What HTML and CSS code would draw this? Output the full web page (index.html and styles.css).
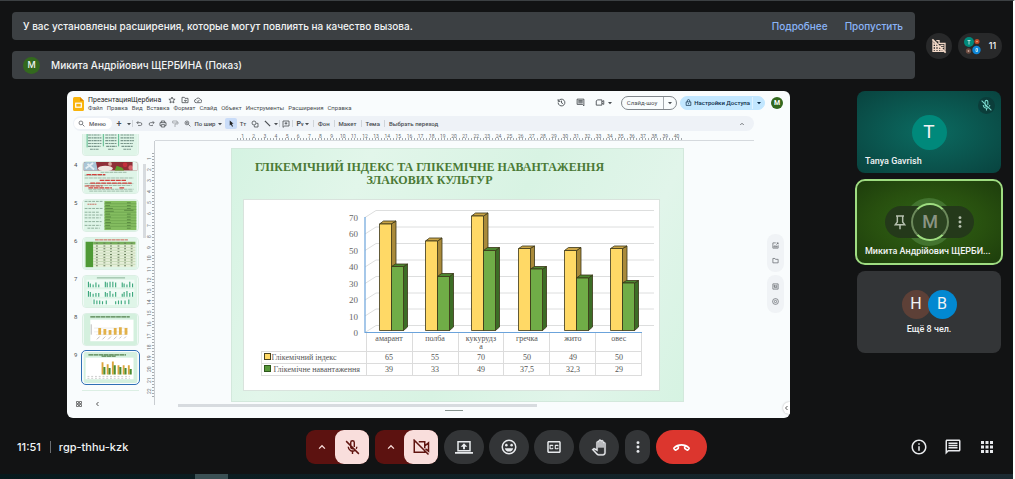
FILE: index.html
```html
<!DOCTYPE html>
<html lang="ru">
<head>
<meta charset="utf-8">
<meta name="viewport" content="width=device-width, initial-scale=1">
<title>rgp-thhu-kzk</title>
<link rel="stylesheet" href="styles.css">
</head>
<body>
<svg class="defs" width="0" height="0" aria-hidden="true">
  <symbol id="i-micoff" viewBox="0 0 24 24"><path d="M9.5 9V5a2.5 2.5 0 0 1 5 0v6.2M9.5 10v1.2a2.5 2.5 0 0 0 3.4 2.3M6 11a6 6 0 0 0 9.3 5M18 11a6 6 0 0 1-.8 3M12 17v4M3 3l18 18" fill="none" stroke="currentColor" stroke-width="2"/></symbol>
  <symbol id="i-up" viewBox="0 0 24 24"><path d="M5 16l7-7 7 7" fill="none" stroke="currentColor" stroke-width="3"/></symbol>
  <symbol id="i-more" viewBox="0 0 24 24"><g fill="currentColor"><circle cx="12" cy="4.500" r="2.500"/><circle cx="12" cy="12" r="2.500"/><circle cx="12" cy="19.500" r="2.500"/></g></symbol>
  <symbol id="i-drop" viewBox="0 0 6 6"><path d="M1 2h4L3 4.300z" fill="currentColor"/></symbol>
</svg>

<header class="top">
  <div class="banners">
    <div class="banner">
      <p>У вас установлены расширения, которые могут повлиять на качество вызова.</p>
      <a href="#more">Подробнее</a>
      <a href="#skip">Пропустить</a>
    </div>
    <div class="banner">
      <span class="badge">М</span>
      <p>Микита Андрійович ЩЕРБИНА (Показ)</p>
    </div>
  </div>
  <div class="status">
    <button class="chip" aria-label="Внешние участники">
      <svg width="16" height="16" viewBox="0 0 24 24"><g fill="none" stroke="#f3d9c8" stroke-width="2"><path d="M3 5v15h16M8 4h4v4h9v11M3 9h4M3 13h12M3 17h14M7 8v12M11 12v8M15 16v4"/><path d="M2 2l20 20" stroke-width="2.500"/></g><path d="M14 11h5M15 14h4" stroke="#f3d9c8" stroke-width="2"/></svg>
    </button>
    <button class="chip people" aria-label="Участники: 11">
      <svg width="18" height="18" viewBox="0 0 18 18"><circle cx="5" cy="5" r="5" fill="#00897b"/><circle cx="13" cy="4.500" r="2.500" fill="#bf4a26"/><circle cx="4.500" cy="14" r="2.700" fill="#6d4c41"/><circle cx="12.500" cy="13" r="4.200" fill="#0d86d8"/><path d="M3.500 3.500h3M5 3.500v4M12 11.500v3h1.500v-3z" stroke="#d7f3f0" stroke-width=".8" fill="none"/><circle cx="13" cy="4.500" r=".8" fill="#f0b090"/><circle cx="4.500" cy="14" r=".9" fill="#c9a99d"/></svg>
      <span>11</span>
    </button>
  </div>
</header>

<main class="stage">
  <section class="share">
    <div class="doc-head">
      <svg class="logo" width="11" height="14" viewBox="0 0 11 14"><path d="M1.500 0H7l4 4v8.500q0 1.500-1.500 1.500h-8Q0 14 0 12.500v-11Q0 0 1.500 0z" fill="#f9b40b"/><path d="M7 0l4 4H7z" fill="#e08b00"/><rect x="2.700" y="6.200" width="5.600" height="4" fill="none" stroke="#fff" stroke-width="1.200"/></svg>
      <div class="doc-names">
        <div class="doc-title"><span>ПрезентацияЩербина</span>
          <svg width="8" height="8" viewBox="0 0 24 24" class="ln"><path d="M12 3l2.700 6.200 6.600.6-5 4.400 1.500 6.600-5.800-3.500-5.800 3.500 1.500-6.600-5-4.400 6.600-.6z"/></svg>
          <svg width="8" height="8" viewBox="0 0 24 24" class="ln"><path d="M3 20V4h7l2 3h9v13zM9 14h7M13 11l3 3-3 3"/></svg>
          <svg width="8" height="8" viewBox="0 0 24 24" class="ln"><path d="M7 20a5 5 0 0 1-1-10 7 7 0 0 1 13 1 4.500 4.500 0 0 1 0 9zM9 14l3 3 4-5"/></svg>
        </div>
        <nav class="menu"><a href="#f">Файл</a><a href="#e">Правка</a><a href="#v">Вид</a><a href="#i">Вставка</a><a href="#o">Формат</a><a href="#s">Слайд</a><a href="#b">Объект</a><a href="#t">Инструменты</a><a href="#x">Расширения</a><a href="#h">Справка</a></nav>
      </div>
      <div class="doc-actions">
        <svg width="9" height="9" viewBox="0 0 24 24" class="ln"><path d="M4 8a9 9 0 1 1-1 4M3 3v6h6M12 7v6l4 2"/></svg>
        <svg width="9" height="9" viewBox="0 0 24 24" class="ln"><path d="M3 3h18v18l-4-4H3zM6 7h12M6 10h12M6 13h12"/></svg>
        <span class="cam"><svg width="10" height="9" viewBox="0 0 26 24" class="ln"><path d="M6 5h12v14H3V8zM18 10l5-3v10l-5-3"/></svg><svg width="6" height="6"><use href="#i-drop"/></svg></span>
        <div class="split"><button>Слайд-шоу</button><button aria-label="Варианты показа"><svg width="6" height="6"><use href="#i-drop"/></svg></button></div>
        <div class="split access"><button><svg width="7" height="7" viewBox="0 0 24 24" class="ln"><path d="M4 10h16v12H4zM8 10V6a4 4 0 0 1 8 0v4M12 14v4"/></svg>Настройки Доступа</button><button aria-label="Варианты доступа"><svg width="6" height="6"><use href="#i-drop"/></svg></button></div>
        <span class="badge small">М</span>
      </div>
    </div>

    <div class="toolbar">
      <label class="find"><svg width="7" height="7" viewBox="0 0 24 24" class="ln"><circle cx="10" cy="10" r="6.500"/><path d="M15 15l7 7"/></svg><input type="text" placeholder="Меню" aria-label="Меню"></label>
      <button class="t s">+</button>
      <button class="t xs" aria-label="Макеты"><svg width="6" height="6"><use href="#i-drop"/></svg></button><i></i>
      <button class="t" aria-label="Отменить"><svg width="7" height="7" viewBox="0 0 24 24" class="ln"><path d="M8 4L3 9l5 5M3 9h12a5 5 0 0 1 0 10H7"/></svg></button>
      <button class="t" aria-label="Повторить"><svg width="7" height="7" viewBox="0 0 24 24" class="ln"><path d="M16 4l5 5-5 5M21 9H9a5 5 0 0 0 0 10h8"/></svg></button>
      <button class="t" aria-label="Печать"><svg width="8" height="8" viewBox="0 0 24 24" class="ln"><path d="M7 8V3h10v5M6 17H3V8h18v9h-3M7 14h10v7H7z"/></svg></button>
      <button class="t pale" aria-label="Копировать формат"><svg width="8" height="8" viewBox="0 0 24 24" class="ln"><path d="M5 3h13v6H5zM18 6h3v6h-9v9"/></svg></button>
      <button class="t" aria-label="Увеличить"><svg width="7" height="7" viewBox="0 0 24 24" class="ln"><circle cx="10" cy="10" r="6.500"/><path d="M15 15l7 7M7 10h6M10 7v6"/></svg></button>
      <button class="t zoom">По шир <svg width="6" height="6"><use href="#i-drop"/></svg></button>
      <button class="t on" aria-label="Выбрать"><svg width="7" height="7" viewBox="0 0 24 24"><path d="M6 2l13 11h-6l4 8-3 2-4-8-4 4z" fill="#222"/></svg></button>
      <button class="t">Тт</button>
      <button class="t" aria-label="Фигура"><svg width="8" height="8" viewBox="0 0 24 24" class="ln"><circle cx="9" cy="9" r="6"/><path d="M16 10h5v11H10v-5"/></svg></button>
      <button class="t" aria-label="Линия"><svg width="7" height="7" viewBox="0 0 24 24" class="ln"><path d="M3 3l18 18" stroke-width="4"/></svg></button>
      <button class="t xs" aria-label="Типы линий"><svg width="6" height="6"><use href="#i-drop"/></svg></button><i></i>
      <button class="t" aria-label="Комментарий"><svg width="8" height="8" viewBox="0 0 24 24" class="ln"><path d="M3 3h18v15H8l-5 4zM8 10h8M12 6v8"/></svg></button><i></i>
      <button class="t pen">P<small>v</small> <svg width="6" height="6"><use href="#i-drop"/></svg></button><i></i>
      <button class="t word">Фон</button><i></i>
      <button class="t word">Макет</button><i></i>
      <button class="t word">Тема</button><i></i>
      <button class="t word">Выбрать переход</button>
      <button class="t fold" aria-label="Скрыть меню"><svg width="6" height="6"><use href="#i-up"/></svg></button>
    </div>

    <div class="work">
      <aside class="film">
        <ol>
          <li><span></span><svg class="thumb first" viewBox="0 0 57 22"><rect width="57" height="22" fill="#dff5e8"/><path d="M4 0v14M21 0v13M37 0v13" stroke="#55b98c" stroke-width="1"/><path d="M5 1h13M5 4h14M5 7h14M5 10h14M5 13h13M23 1h12M23 4h12M23 7h12M23 10h12M24 13h11M39 1h14M39 4h14M39 7h14M39 10h13M40 13h12M7 16h9M26 16h6M42 16h8" stroke="#78958a" stroke-width="1.200" stroke-dasharray="3 .6 2 .5"/></svg></li>
          <li><span>4</span><svg class="thumb" viewBox="0 0 57 33"><rect width="57" height="33" fill="#dff5e8"/><rect width="57" height="9" fill="#8f2f37"/><path d="M0 0h13l2 9H0z" fill="#a9c6d6"/><path d="M4 2l7 6M2 7l8-6" stroke="#e4eef2" stroke-width="2"/><ellipse cx="23" cy="7" rx="8" ry="3" fill="#eee5df"/><circle cx="28" cy="2" r="2" fill="#d9a59c"/><circle cx="44" cy="3" r="2.500" fill="#c52f3c"/><circle cx="50" cy="6" r="2.500" fill="#d9646b"/><path d="M33 9l2-5 3 1 3 1 2 3z" fill="#5f9e2f"/><rect x="52" width="5" height="9" fill="#e8f5ee"/><path d="M18 11h28M1 14h22M1 17h52M1 23h52M3 25h48M5 29h48M6 31h46" stroke="#9bb8a5" stroke-width="1" stroke-dasharray="4 .7"/><path d="M3 13.500h20M17 19.500h28M7 22.500h33M41 22.500h10M1 25.500h19M5 27.500h25M38 27.500h5" stroke="#d4403c" stroke-width="1.200" stroke-dasharray="5 .8"/></svg></li>
          <li><span>5</span><svg class="thumb" viewBox="0 0 57 33"><rect width="57" height="33" fill="#dff5e8"/><rect x="22" y="1" width="34" height="31" fill="#84bd60"/><path d="M1 1.500h20M1 9h20M1 13h15M1 16h19M1 19h17M1 23h18M1 27h17M4 30h13" stroke="#8bab98" stroke-dasharray="3 1"/><path d="M4 4.500h10" stroke="#c86b5e" stroke-dasharray="2 .5"/><path d="M22 4h34M22 7h34M22 10h34M22 13h34M22 16h34M22 19h34M22 22h34M22 25h34M22 28h34" stroke="#649c47" stroke-width=".6"/><path d="M23 3h6M23 6h5M23 9h8M23 12h9M23 15h5M23 18h6M23 21h5M23 24h6M23 27h5M23 30h6M46 3h4M46 6h4M46 9h4M43 11h10M46 15h4M46 18h4M46 21h4M46 24h4M46 27h4M46 30h4" stroke="#4e7c3a" stroke-width=".8"/></svg></li>
          <li><span>6</span><svg class="thumb" viewBox="0 0 57 33"><rect width="57" height="33" fill="#dff5e8"/><path d="M12 2h35" stroke="#cc5a4c" stroke-width="1" stroke-dasharray="4 .5"/><rect x="2" y="4" width="53" height="27" fill="#e6efd9"/><rect x="2" y="4" width="8" height="27" fill="#4e9a35"/><path d="M10 4h45v3H10z" fill="#77ae5b"/><path d="M10 10h45M10 13h45M10 16h45M10 19h45M10 22h45M10 25h45M10 28h45" stroke="#b9cfa8" stroke-width=".7"/><path d="M14 5v25M22 5v25M29 5v25M37 5v25M44 5v25M51 5v25" stroke="#667d59" stroke-width="2" stroke-dasharray="1 2"/></svg></li>
          <li><span>7</span><svg class="thumb" viewBox="0 0 57 33"><rect width="57" height="33" fill="#dff5e8"/><path d="M3 4h51v8H3zM3 14h51v8H3zM9 24h40v7H9z" fill="#f1fbf6"/><path d="M14 2h30" stroke="#6e9c7e" stroke-width=".8"/><g stroke="#3ba77b" stroke-width="1.200"><path d="M5 12V6M7 12V8M10 12V9M13 12V7M16 12V9M23 12V6M25 12V7M28 12V6M31 12V6M34 12V7M41 12V7M43 12V8M46 12V9M49 12V6M52 12V8M5 22v-6M7 22v-5M10 22v-3M13 22v-4M16 22v-4M23 22v-5M25 22v-4M28 22v-6M31 22v-3M34 22v-5M41 22v-3M43 22v-5M46 22v-6M49 22v-4M52 22v-5M11 30v-5M14 30v-4M17 30v-4M20 30v-3M24 30v-4M34 30v-3M37 30v-4M40 30v-4M44 30v-4M48 30v-5"/></g></svg></li>
          <li><span>8</span><svg class="thumb" viewBox="0 0 57 33"><rect width="57" height="33" fill="#d4f0de"/><rect x="7" y="6" width="46" height="23" fill="#fff"/><path d="M7 3h42" stroke="#4f7f49" stroke-width="1.200" stroke-dasharray="5 .5"/><path d="M11 15h36M11 19h36M13 22h33" stroke="#ddd" stroke-width=".6"/><path d="M17 22v-7M22.500 22v-6M28 22v-5M33.500 22v-7M39 22v-8M45 22v-7" stroke="#e2b149" stroke-width="3"/><path d="M14 27l3-3M20 27l3-3M26 27l3-3M32 27l3-3M38 26l2-2M43 26l2-2M8 11v11" stroke="#aaa" stroke-width=".8"/></svg></li>
          <li class="current"><span>9</span><svg class="thumb" viewBox="0 0 57 33"><rect width="57" height="33" fill="#d4f0de"/><rect x="2" y="6" width="51" height="23" fill="#fff"/><path d="M5 3h40M19 4.500h15" stroke="#4f7f49" stroke-width="1.200" stroke-dasharray="5 .5"/><path d="M20 24V11M25.500 24V13M31 24V10M37 24V14M42.500 24V14M48 24V14" stroke="#dba53c" stroke-width="2"/><path d="M22 24v-8M27.500 24v-7M33 24V14M39 24v-8M44.500 24v-7M50 24v-6" stroke="#4b8c31" stroke-width="2.200"/><path d="M4 26h45M4 28h45" stroke="#bbb" stroke-width=".8" stroke-dasharray="2 2"/></svg></li>
        </ol>
        <div class="next"></div>
        <div class="film-foot">
          <svg width="6" height="6" viewBox="0 0 6 6" fill="none" stroke="#555"><path d="M.5.5h2v2h-2zM3.500.5h2v2h-2zM.5 3.500h2v2h-2zM3.500 3.500h2v2h-2z" stroke-width=".8"/></svg>
          <svg width="5" height="6" viewBox="0 0 5 6" fill="none" stroke="#555"><path d="M3.500 1L1.500 3l2 2"/></svg>
        </div>
      </aside>
      <div class="film-scroll"></div>
      <div class="vruler"><span>1</span><span>2</span><span>3</span><span>4</span><span>5</span><span>6</span><span>7</span><span>8</span><span>9</span><span>10</span><span>11</span><span>12</span><span>13</span><span>14</span><span>15</span><span>16</span><span>17</span><span>18</span><span>19</span><span>20</span><span>21</span><span>22</span></div>
      <div class="canvas">
        <div class="hruler"><span>1</span><span>2</span><span>3</span><span>4</span><span>5</span><span>6</span><span>7</span><span>8</span><span>9</span><span>10</span><span>11</span><span>12</span><span>13</span><span>14</span><span>15</span><span>16</span><span>17</span><span>18</span><span>19</span><span>20</span><span>21</span><span>22</span><span>23</span><span>24</span><span>25</span><span>26</span><span>27</span><span>28</span><span>29</span><span>30</span><span>31</span><span>32</span><span>33</span><span>34</span><span>35</span><span>36</span><span>37</span><span>38</span><span>39</span><span>40</span></div>
        <div class="slide">
          <h1>ГЛІКЕМІЧНИЙ ІНДЕКС ТА ГЛІКЕМІЧНЕ НАВАНТАЖЕННЯ<br>ЗЛАКОВИХ КУЛЬТУР</h1>
          <div class="card">
            <svg class="plot" viewBox="244 200 415 133">
              <g fill="none" stroke="#d4d6d6" stroke-width=".8">
                <path d="M365 217.500l11-7h278M365 234l11-7h278M365 250.500l11-7h278M365 267l11-7h278M365 283.500l11-7h278M365 300l11-7h278M365 316l11-7h278M365 332.500l11-7h278"/>
              </g>
              <g class="axis"><text x="358" y="221">70</text><text x="358" y="237">60</text><text x="358" y="254">50</text><text x="358" y="270">40</text><text x="358" y="287">30</text><text x="358" y="303">20</text><text x="358" y="320">10</text><text x="358" y="336">0</text></g>
              <path d="M365 217v115.500h277" fill="none" stroke="#6ba3db" stroke-width="1.200"/>
              <g stroke="#3a3516" stroke-width=".8" stroke-linejoin="round">
                <g fill="#a98a3a"><path d="M391 224l5-3v106l-5 3.500zM437.500 241l4.500-3v89l-4.500 3.500zM483.500 216l4.500-3v114l-4.500 3.500zM530 248.500l4.500-2.500v81l-4.500 3.500zM576.500 250.500l4.500-3v79.500l-4.500 3.500zM622.500 248.500l4.500-2.500v81l-4.500 3.500z"/></g>
                <g fill="#caa548"><path d="M379.500 224l4-3H396l-5 3zM425.500 241l4-3H442l-4.500 3zM471.500 216l4-3H488l-4.500 3zM518.500 248.500l4-2.500h12l-4.500 2.500zM564.500 250.500l4-3H581l-4.500 3zM610.500 248.500l4-2.500H627l-4.500 2.500z"/></g>
                <g fill="#ffd966"><path d="M379.500 224H391.500v106.500h-12zM425.500 241h12v89.500h-12zM471.500 216h12v114.500h-12zM518.500 248.500h12v82h-12zM564.500 250.500h12v80h-12zM610.500 248.500h12v82h-12z"/></g>
                <g fill="#3c6d26"><path d="M403.500 266.500l4-2.500v63l-4 3.500zM449.500 276.500l4-3v53.500l-4 3.500zM495.500 250.500l4-3v79.500l-4 3.500zM542.500 269l4-2.500V327l-4 3.500zM588.500 278l4-3v52l-4 3.500zM634.500 283l4-2.500V327l-4 3.500z"/></g>
                <g fill="#4c8630"><path d="M391.500 266.500l4-2.500h12l-4 2.500zM437.500 276.500l4-3h12l-4 3zM483.500 250.500l4-3h12l-4 3zM530.500 269l4-2.500h12l-4 2.500zM576.500 278l4-3h12l-4 3zM622.500 283l4-2.500h12l-4 2.500z"/></g>
                <g fill="#70ad47"><path d="M391.500 266.500h12v64h-12zM437.500 276.500h12v54h-12zM483.500 250.500h12v80h-12zM530.500 269h12v61.500h-12zM576.500 278h12v52.500h-12zM622.500 283h12v47.500h-12z"/></g>
              </g>
            </svg>
            <table>
              <thead><tr><td></td><th>амарант</th><th>полба</th><th>кукурудз<br>а</th><th>гречка</th><th>жито</th><th>овес</th></tr></thead>
              <tbody>
                <tr><th class="gi">Глікемічний індекс</th><td>65</td><td>55</td><td>70</td><td>50</td><td>49</td><td>50</td></tr>
                <tr><th class="gl">Глікемічне навантаження</th><td>39</td><td>33</td><td>49</td><td>37,5</td><td>32,3</td><td>29</td></tr>
              </tbody>
            </table>
          </div>
        </div>
        <div class="hscroll"></div>
        <div class="grip"></div>
      </div>
      <div class="side">
        <div class="side-tools">
          <svg width="7" height="7" viewBox="0 0 24 24" class="ln"><path d="M13 3H3v18h18V11M6 17l4-5 3 3 2-2 3 4zM16 3h5v5M15 9l6-6"/></svg>
          <svg width="7" height="7" viewBox="0 0 24 24" class="ln"><path d="M3 20V5h7l2 3h9v12z"/></svg>
        </div>
        <div class="side-tools">
          <svg width="7" height="7" viewBox="0 0 24 24" class="ln"><path d="M3 3h18v18H3zM7 8h4v4H7zM14 8h4M14 12h4M7 16h11"/></svg>
          <svg width="7" height="7" viewBox="0 0 24 24" class="ln"><circle cx="12" cy="12" r="10"/><circle cx="12" cy="12" r="4"/></svg>
        </div>
        <button class="open" aria-label="Показать боковую панель"><svg width="5" height="6" viewBox="0 0 5 6" fill="none" stroke="#555"><path d="M3.500 1L1.500 3l2 2"/></svg></button>
      </div>
    </div>
  </section>

  <aside class="tiles">
    <article class="tile teal">
      <span class="muted"><svg width="13" height="13"><use href="#i-micoff"/></svg></span>
      <span class="face">T</span>
      <p>Tanya Gavrish</p>
    </article>
    <article class="tile green">
      <span class="halo"></span>
      <div class="hover">
        <button aria-label="Закрепить"><svg width="16" height="16" viewBox="0 0 24 24"><path d="M6 3h12M8 3v9l-3 4h14l-3-4V3M12 16v7" fill="none" stroke="currentColor" stroke-width="2.200"/></svg></button>
        <span class="ring">M</span>
        <button aria-label="Ещё"><svg width="14" height="14"><use href="#i-more"/></svg></button>
      </div>
      <p>Микита Андрійович ЩЕРБИ...</p>
    </article>
    <article class="tile others">
      <div class="pair"><span class="brown">H</span><span class="blue">B</span></div>
      <p>Ещё 8 чел.</p>
    </article>
  </aside>
</main>

<footer class="bar">
  <div class="when"><time>11:51</time><span>rgp-thhu-kzk</span></div>
  <div class="controls">
    <div class="device"><button class="opt" aria-label="Настройки звука"><svg width="10" height="10"><use href="#i-up"/></svg></button><button class="off" aria-label="Включить микрофон"><svg width="17" height="17"><use href="#i-micoff"/></svg></button></div>
    <div class="device"><button class="opt" aria-label="Настройки видео"><svg width="10" height="10"><use href="#i-up"/></svg></button><button class="off" aria-label="Включить камеру"><svg width="18" height="18" viewBox="0 0 24 24"><path d="M9 5h8v8.500M17 10.500l5-4v11l-4-3M6 5H3v14h14v-2M2 2l20 20" fill="none" stroke="currentColor" stroke-width="2"/></svg></button></div>
    <div class="rounds">
      <button class="round" aria-label="Показать экран"><svg width="18" height="18" viewBox="0 0 24 24"><path d="M4 5h16v12H4z" fill="none" stroke="currentColor" stroke-width="2"/><path d="M0 18.500h24v2.500H0zM12 7l4.500 4.500H13.300V15h-2.600v-3.500H7.500z" fill="currentColor"/></svg></button>
      <button class="round" aria-label="Реакции"><svg width="18" height="18" viewBox="0 0 24 24"><circle cx="12" cy="12" r="9" fill="none" stroke="currentColor" stroke-width="2"/><circle cx="8.500" cy="9.500" r="1.700" fill="currentColor"/><circle cx="15.500" cy="9.500" r="1.700" fill="currentColor"/><path d="M6.500 13.500h11a5.600 5.600 0 0 1-11 0z" fill="currentColor"/></svg></button>
      <button class="round" aria-label="Субтитры"><svg width="18" height="18" viewBox="0 0 24 24"><path fill="currentColor" d="M19 4H5c-1.110 0-2 .9-2 2v12c0 1.100.89 2 2 2h14c1.100 0 2-.9 2-2V6c0-1.100-.9-2-2-2zm0 14H5V6h14v12zM7 15h3c.55 0 1-.45 1-1v-1H9.500v.5h-2v-3h2v.5H11v-1c0-.55-.45-1-1-1H7c-.55 0-1 .45-1 1v4c0 .55.45 1 1 1zm7 0h3c.55 0 1-.45 1-1v-1h-1.500v.5h-2v-3h2v.5H18v-1c0-.55-.45-1-1-1h-3c-.55 0-1 .45-1 1v4c0 .55.45 1 1 1z"/></svg></button>
      <button class="round" aria-label="Поднять руку"><svg width="16" height="17" viewBox="0 0 24 24"><path fill="currentColor" stroke="currentColor" stroke-width=".4" d="M18 24h-6.550c-1.080 0-2.140-.45-2.890-1.230l-7.300-7.610 2.070-1.830c.62-.55 1.530-.66 2.260-.27L8 14.340V4.790c0-1.380 1.120-2.500 2.500-2.500.17 0 .34.02.51.05.09-1.300 1.170-2.330 2.490-2.330.86 0 1.610.43 2.060 1.090.29-.12.61-.18.94-.18 1.380 0 2.500 1.120 2.500 2.500v.28c.16-.03.33-.05.5-.05 1.380 0 2.500 1.120 2.500 2.500V20c0 2.210-1.790 4-4 4zM4.140 15.280l5.860 6.100c.38.39.9.62 1.440.62H18c1.100 0 2-.9 2-2V6.150c0-.28-.22-.5-.5-.5s-.5.22-.5.5V12h-2V3.420c0-.28-.22-.5-.5-.5s-.5.22-.5.5V12h-2V2.510c0-.28-.22-.5-.5-.5s-.5.22-.5.5V12h-2V4.790c0-.28-.22-.5-.5-.5s-.5.23-.5.5v12.870l-5.350-2.830-.51.45z"/></svg></button>
    </div>
    <button class="round slim" aria-label="Другие параметры"><svg width="14" height="14"><use href="#i-more"/></svg></button>
    <button class="round end" aria-label="Покинуть звонок"><svg width="17" height="17" viewBox="0 0 24 24"><path d="M7.500 9.700v3c0 .6-.3.900-.7 1.100l-2.800 1.900q-.5.300-1-.2l-1.500-1.800q-.5-.7.100-1.300C7 7 17 7 22.400 12.400q.6.600.1 1.300L21 15.500q-.5.500-1 .2l-2.800-1.900c-.4-.2-.7-.5-.7-1.100v-3" fill="none" stroke="currentColor" stroke-width="2.300"/></svg></button>
  </div>
  <div class="extras">
    <button aria-label="Сведения о встрече"><svg width="18" height="18" viewBox="0 0 24 24"><path fill="currentColor" d="M11 7h2v2h-2zm0 4h2v6h-2zm1-9C6.480 2 2 6.480 2 12s4.480 10 10 10 10-4.480 10-10S17.520 2 12 2zm0 18c-4.410 0-8-3.590-8-8s3.590-8 8-8 8 3.590 8 8-3.590 8-8 8z"/></svg></button>
    <button aria-label="Чат"><svg width="18" height="18" viewBox="0 0 24 24"><path fill="currentColor" d="M4 4h16v12H5.170L4 17.170V4m0-2c-1.100 0-1.990.9-1.990 2L2 22l4-4h14c1.100 0 2-.9 2-2V4c0-1.100-.9-2-2-2H4zm2 10h12v2H6v-2zm0-3h12v2H6V9zm0-3h12v2H6V6z"/></svg></button>
    <button aria-label="Инструменты встречи"><svg width="18" height="18" viewBox="0 0 24 24"><path fill="currentColor" d="M4 4h4v4H4zM10 4h4v4h-4zM16 4h4v4h-4zM4 10h4v4H4zM10 10h4v4h-4zM16 10h4v4h-4zM4 16h4v4H4zM10 16h4v4h-4zM16 16h4v4h-4z"/></svg></button>
  </div>
</footer>
<div class="taskbar"><span></span></div>
</body>
</html>
```
FILE: styles.css
```css
* { box-sizing: border-box; }
body {
  margin: 0;
  min-height: 100vh;
  display: flex;
  flex-direction: column;
  background: #121314;
  border-top: 1px solid #3c4043;
  border-right: 2px solid #fff;
  color: #f1f3f4;
  font: 500 10px/16px Inter, Roboto, sans-serif;
}
p, h1, ol { margin: 0; padding: 0; }
ol { list-style: none; }
svg { display: block; flex: none; }
.defs { position: absolute; }
a { color: inherit; text-decoration: none; }
button {
  display: flex;
  align-items: center;
  justify-content: center;
  padding: 0;
  border: 0;
  background: none;
  color: inherit;
  font: inherit;
}
.ln { fill: none; stroke: currentColor; stroke-width: 2.4; }

/* notices */
.top { display: flex; align-items: center; gap: 11px; padding: 11px 11px 12px 12px; }
.banners { flex: 1; display: grid; gap: 11px; }
.banner {
  display: flex;
  align-items: center;
  height: 28px;
  padding: 0 12px 0 11px;
  border-radius: 4px;
  background: #3c4043;
}
.banner p { flex: 1; }
.banner a { margin-left: 17px; color: #8ab4f8; }
.badge {
  display: grid;
  place-items: center;
  width: 17px;
  height: 17px;
  margin-right: 11px;
  border-radius: 50%;
  background: #33691e;
  font-size: 9px;
}
.badge.small { width: 12px; height: 12px; margin: 0 0 0 -4px; color: #fff; font-size: 7px; font-weight: 700; }
.status { display: flex; gap: 6px; margin-top: 1px; }
.chip { width: 26px; height: 26px; border-radius: 13px; background: #28292a; }
.chip.people { width: 44px; gap: 7px; font-size: 9px; }

/* stage */
.stage { flex: 1; display: flex; align-items: stretch; gap: 67px; padding: 0 12px 0 67px; }
.share {
  flex: 1;
  min-width: 0;
  display: flex;
  flex-direction: column;
  overflow: hidden;
  border-radius: 6px;
  background: #f9fcfd;
  color: #4a4e52;
  font: 400 6px/8px Roboto, sans-serif;
}
.doc-head { display: flex; align-items: flex-start; height: 25px; padding: 5px 7px 0 6px; }
.logo { margin-top: 1px; }
.doc-names { margin-left: 4px; }
.doc-title { display: flex; align-items: center; gap: 5px; color: #1f1f1f; font-size: 7px; }
.doc-title span { margin-right: 2px; }
.doc-title svg { color: #4a4e52; }
.menu { display: flex; gap: 4px; }
.doc-actions { flex: 1; display: flex; align-items: center; justify-content: flex-end; gap: 10px; height: 13px; }
.cam { display: flex; align-items: center; gap: 2px; margin-right: -2px; }
.split { display: flex; height: 14px; border: 1px solid #80868b; border-radius: 7px; }
.split button:first-child { gap: 3px; padding: 0 6px 0 5px; }
.split button:last-child { width: 13px; border-left: 1px solid #a5abb0; }
.split.access { margin-left: -7px; border-color: #c2e7ff; background: #c2e7ff; color: #0b2c48; font-weight: 500; }
.split.access button:first-child { gap: 2px; padding: 0 2px 0 4px; }
.split.access button:last-child { width: 12px; border-color: #dff2ff; }

.toolbar {
  display: flex;
  align-items: center;
  height: 15px;
  margin: 0 36px 0 6px;
  padding: 0 6px 0 1px;
  border-radius: 8px;
  background: #eef2f7;
  font-weight: 500;
}
.find { display: flex; align-items: center; gap: 4px; width: 38px; height: 11px; padding: 0 4px; border-radius: 6px; background: #fff; }
.find input { width: 22px; padding: 0; border: 0; background: none; font: inherit; }
.find input::placeholder { color: #5f6368; opacity: 1; }
.toolbar i { width: 1px; height: 7px; background: #cfd4d9; }
.t { width: 12px; height: 11px; }
.t.s { width: 14px; font-size: 9px; }
.t.xs { width: 6px; }
.t.pale { opacity: .5; }
.t.zoom { width: 32px; gap: 2px; }
.t.on { border-radius: 2px; background: #c9dcf8; }
.t.pen { width: 20px; font-size: 7px; font-weight: 700; }
.t.pen small { font-size: 5px; }
.t.word { width: auto; padding: 0 4px; }
.t.fold { margin-left: auto; }

.work { flex: 1; display: flex; min-height: 0; }
.film { width: 76px; padding: 3px 0 0 7px; }
.film ol { display: grid; gap: 5px; }
.film li { display: flex; gap: 1px; height: 33px; }
.film li:first-child { height: 22px; }
.film li span { width: 7px; font-size: 6px; line-height: 8px; }
.thumb { width: 57px; height: 33px; border: 1px solid #dcefe4; border-radius: 4px; }
.thumb.first { height: 22px; border-top: 0; border-radius: 0 0 4px 4px; }
.current .thumb { border-color: #f9fcfd; outline: 1px solid #2f6fb5; }
.next { height: 4px; width: 57px; margin: 6px 0 0 8px; border-top: 1px solid #dcefe4; }
.film-foot { display: flex; gap: 13px; margin: 7px 0 0 2px; }
.film-scroll { width: 3px; height: 74px; margin-top: 33px; background: #d7dbdf; }
.vruler {
  display: flex;
  flex-direction: column;
  width: 9px;
  margin: 10px 0 13px;
  padding: 12px 2px 8px 0;
  border-right: 1px solid #c9cdd1;
  background: repeating-linear-gradient(#a4a9ad 0 1px, transparent 1px 3px) right 12px / 2px 245px no-repeat;
  color: #6b7074;
  font-size: 5px;
  line-height: 6px;
}
.vruler span { flex: 1; writing-mode: vertical-rl; transform: rotate(180deg); text-align: center; }
.canvas { flex: 1; display: flex; flex-direction: column; min-width: 0; }
.hruler {
  display: flex;
  height: 10px;
  padding: 2px 72px 0 82px;
  border-bottom: 1px solid #d5d9dd;
  background: repeating-linear-gradient(90deg, #a4a9ad 0 1px, transparent 1px 3px) 82px bottom / 446px 2px no-repeat;
  color: #6b7074;
  font-size: 5px;
  line-height: 6px;
}
.hruler span { flex: 1 1 0; text-align: center; }

.slide {
  flex: 1;
  margin: 7px 70px 0 76px;
  padding: 12px 23px 9px 11px;
  border: 1px solid #d3e8dc;
  background: linear-gradient(115deg, #d5f3e2, #e2f6ea 25%, #d8f3e3 55%, #e1f5ea 80%, #d6f3e2);
}
.slide h1 { padding-right: 44px; color: #4b7a35; font: 700 12px/13px "Liberation Serif", serif; text-align: center; white-space: nowrap; }
.card { margin-top: 12px; padding-bottom: 14px; border: 1px solid #d9e3dd; background: #fff; }
.plot { width: 100%; height: auto; overflow: visible; }
.axis { fill: #666; font: 9px "Liberation Serif", serif; text-anchor: end; }
.card table {
  width: 92%;
  margin-left: 4%;
  border-collapse: collapse;
  table-layout: fixed;
  color: #555;
  font: 8px/8px "Liberation Serif", serif;
  text-align: center;
}
.card th, .card td { padding: 1px 0; border: 1px solid #dcdcdc; font-weight: 400; }
.card thead th { vertical-align: top; border-top: 0; padding: 2px 0 0; }
.card thead td { width: 105px; border: 0; }
.card tbody th { text-align: left; white-space: nowrap; }
.card tbody th::before { content: ""; display: inline-block; width: 5px; height: 5px; margin: 0 1px 0 2px; border: 1px solid #4a431d; background: #ffd966; }
.card tbody th.gl::before { margin-right: 3px; border-color: #2e571b; background: #57973a; }
.hscroll { width: 60%; height: 3px; margin: 2px 0 0 23px; background: #d7dbdf; }
.grip { width: 18px; height: 1px; margin: 3px 0 7px 290px; background: #87948f; }

.side { width: 36px; display: flex; flex-direction: column; align-items: center; gap: 3px; padding: 103px 0 0 7px; }
.side-tools { display: grid; place-items: center; width: 17px; height: 38px; padding: 4px 0; border-radius: 8px; background: #f0f3f6; color: #5f6368; }
.open { align-self: flex-end; width: 7px; height: 12px; margin: auto 0 4px; border-radius: 6px 0 0 6px; background: #fff; box-shadow: 0 0 2px #aaa; }

/* participants */
.tiles { display: grid; align-content: start; gap: 8px; width: 144px; }
.tile {
  position: relative;
  display: grid;
  place-items: center;
  height: 82px;
  border-radius: 8px;
  font: 500 9px/12px Roboto, sans-serif;
}
.tile > p { position: absolute; left: 8px; bottom: 6px; white-space: nowrap; }
.teal { background: radial-gradient(#0b6b61, #0a4f49 70%, #08433f); }
.green { background: radial-gradient(#2f6316, #28500f 55%, #1d3d0c); outline: 2px solid #9fdd81; }
.face { display: grid; place-items: center; width: 35px; height: 35px; border-radius: 50%; background: #00897b; font-size: 19px; font-weight: 400; }
.muted { position: absolute; top: 6px; right: 6px; display: grid; place-items: center; width: 17px; height: 17px; border-radius: 50%; background: #0b3d3a; color: #78d6ca; }
.halo { position: absolute; width: 48px; height: 48px; border-radius: 50%; background: #43742f; }
.hover { position: relative; display: flex; align-items: center; justify-content: space-between; width: 89px; height: 32px; padding: 0 7px; border-radius: 16px; background: #24391a; color: #b5bfae; }
.ring { display: grid; place-items: center; width: 38px; height: 38px; border: 2px solid #6d8a5c; border-top-color: #9fdd81; border-bottom-color: #9fdd81; border-radius: 50%; background: #2b4320; color: #8a9484; font-size: 18px; }
.others { align-content: center; gap: 4px; background: #333537; }
.tile.others > p { position: static; }
.pair { display: flex; }
.pair span { display: grid; place-items: center; width: 29px; height: 29px; border-radius: 50%; font-size: 16px; font-weight: 400; }
.brown { margin-right: -3px; background: #5d4037; }
.blue { background: #0288d1; }

/* call controls */
.bar { display: grid; grid-template-columns: 1fr auto 1fr; align-items: center; padding: 12px 17px 10px; }
.when { display: flex; align-items: center; font-size: 11px; }
.when span { margin-left: 9px; padding-left: 8px; border-left: 1px solid #6b6e71; line-height: 12px; }
.controls { display: flex; gap: 6px; }
.device { display: flex; width: 63px; height: 34px; border-radius: 9px; background: #5c1210; color: #f9dedc; }
.opt { flex: 1; padding-left: 3px; }
.off { width: 34px; border-radius: 9px; background: #f9dedc; color: #601410; }
.rounds { display: flex; gap: 5px; }
.round { width: 40px; height: 34px; border-radius: 17px; background: #333537; color: #e8eaed; }
.round.slim { width: 25px; border-radius: 12px; }
.round.end { width: 51px; background: #dc362e; color: #fff; }
.extras { display: flex; justify-content: flex-end; gap: 16px; color: #e8eaed; }

.taskbar { height: 5px; background: linear-gradient(90deg, #07191c, #1c2a31); }
.taskbar span { display: block; width: 33px; height: 5px; margin-left: 195px; background: #3b5054; }
```
